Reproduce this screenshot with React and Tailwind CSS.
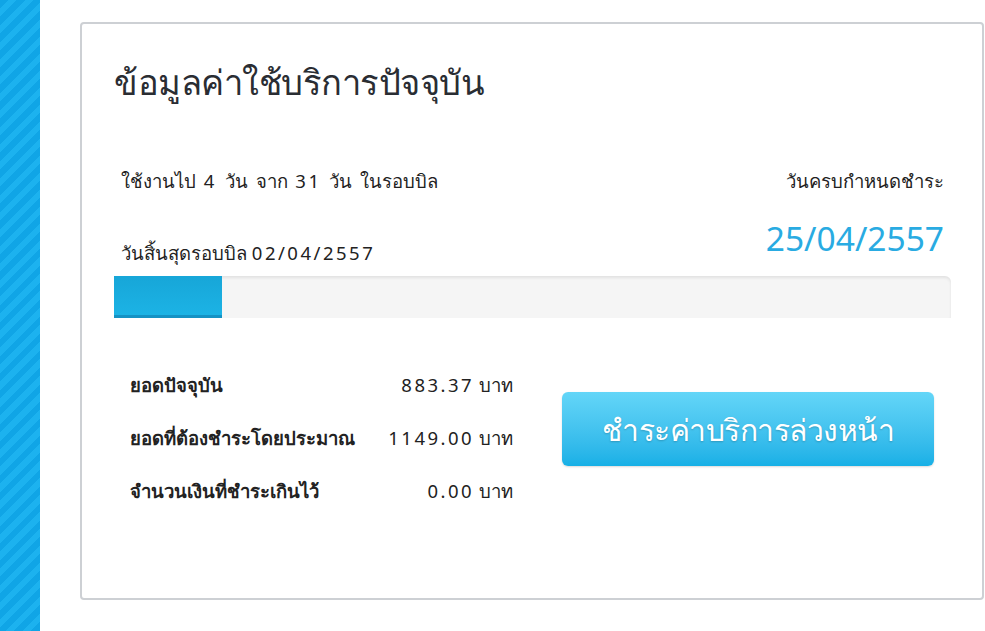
const rows = [
  { label: 'ยอดปัจจุบัน', value: '883.37' },
  { label: 'ยอดที่ต้องชำระโดยประมาณ', value: '1149.00' },
  { label: 'จำนวนเงินที่ชำระเกินไว้', value: '0.00' },
]

// digits in the reference are set noticeably wider than Noto's
function Num({ children }) {
  return <span className="tracking-[2.5px]">{children}</span>
}

export default function App() {
  return (
    <div className="flex h-[631px] w-[985px] overflow-hidden bg-white font-['Noto_Sans',sans-serif] text-[#222]">
      {/* striped side strip */}
      <div className="h-full w-[40px] shrink-0 bg-[repeating-linear-gradient(135deg,#10a5e6_0px,#10a5e6_6px,#1cb2ef_6px,#1cb2ef_12px)]" />

      <div className="flex-1 pl-[40px] pt-[22px]">
        <div className="flex h-[578px] w-[904px] flex-col rounded-[4px] border-2 border-[#cdd0d4] pl-[32px] pr-[31px]">
          <h1 className="mt-[34px] text-[34.5px] font-light leading-[48px] tracking-[-0.5px] text-[#2a2d33]">
            ข้อมูลค่าใช้บริการปัจจุบัน
          </h1>

          <div className="mt-[63px] flex items-start justify-between pl-[7px] pr-[7px]">
            <div className="flex flex-col">
              <span className="text-[18.5px] leading-[24px] [word-spacing:3px]">
                ใช้งานไป <Num>4</Num> วัน จาก <Num>31</Num> วัน ในรอบบิล
              </span>
              <span className="mt-[48px] text-[18.5px] leading-[24px]">
                วันสิ้นสุดรอบบิล <Num>02/04/2557</Num>
              </span>
            </div>
            <div className="flex flex-col items-end">
              <span className="text-[18.5px] leading-[24px]">วันครบกำหนดชำระ</span>
              <span className="mt-[27px] text-[33.5px] leading-[36px] text-[#29abe2]">25/04/2557</span>
            </div>
          </div>

          <div className="mt-[11px] flex h-[42px] overflow-hidden rounded-tr-[6px] bg-[#f5f5f5] shadow-[inset_0_2px_3px_rgba(0,0,0,0.08)]">
            <div className="h-full w-[108px] border-b-[3px] border-[#1592c4] bg-gradient-to-b from-[#17a6d8] to-[#1cb3e5]" />
          </div>

          <div className="mt-[50px] flex items-start justify-between">
            <div className="ml-[16px] mt-[4px] flex w-[383px] flex-col gap-[27px]">
              {rows.map((r) => (
                <div key={r.label} className="flex items-center justify-between text-[18.5px] leading-[26px]">
                  <span className="font-bold">{r.label}</span>
                  <span>
                    <Num>{r.value}</Num> บาท
                  </span>
                </div>
              ))}
            </div>
            <button
              type="button"
              className="mr-[17px] mt-[24px] flex h-[74px] w-[372px] items-center justify-center rounded-[6px] bg-gradient-to-b from-[#63d6f8] to-[#16b0e6] text-[30px] font-light tracking-[-0.5px] text-white shadow-[0_1px_2px_rgba(0,0,0,0.15)] [text-shadow:0_1px_2px_rgba(0,0,0,0.2)]"
            >
              ชำระค่าบริการล่วงหน้า
            </button>
          </div>
        </div>
      </div>
    </div>
  )
}
